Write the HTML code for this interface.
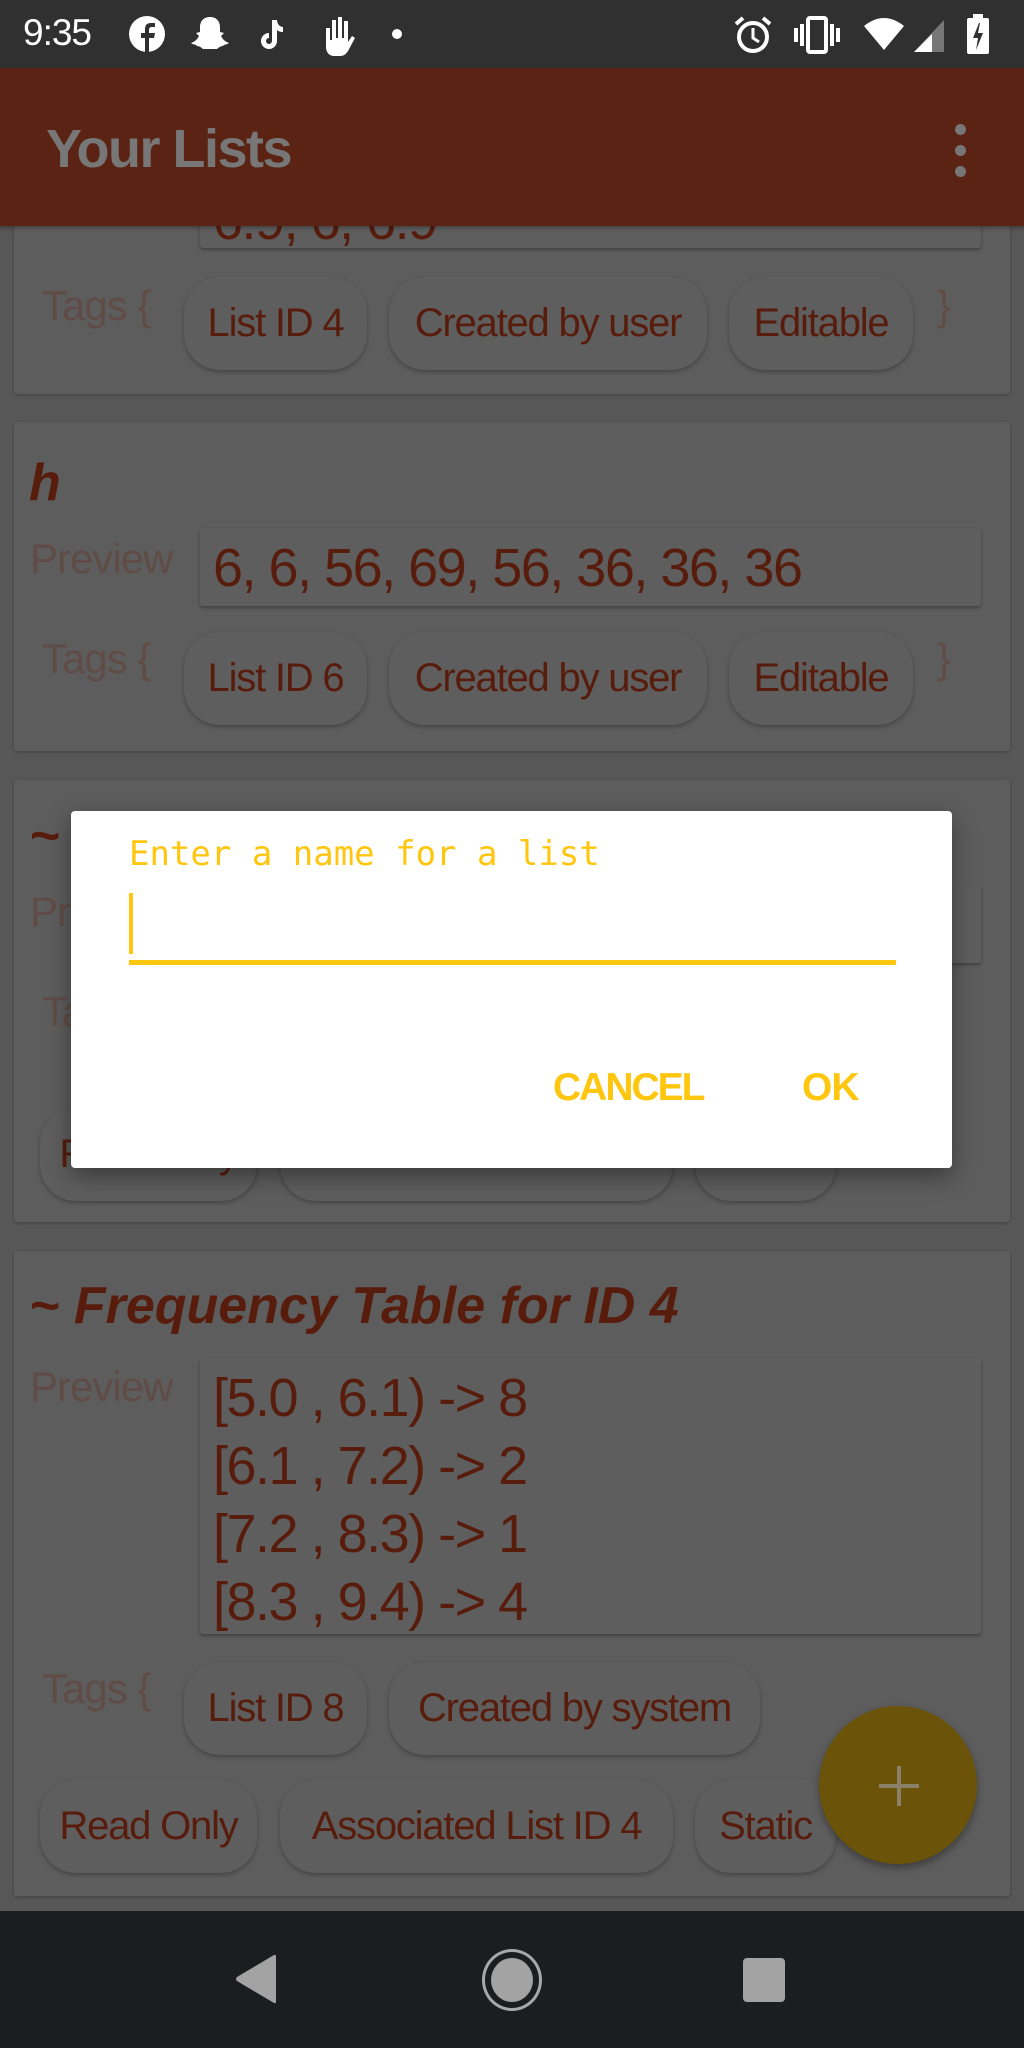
<!DOCTYPE html>
<html><head><meta charset="utf-8"><style>
*{margin:0;padding:0;box-sizing:border-box}
body{width:1024px;height:2048px;background:#575757;position:relative;overflow:hidden;font-family:"Liberation Sans",sans-serif}
.a{position:absolute}
.card{position:absolute;left:14px;width:996px;background:#5d5d5d;border-radius:3px;box-shadow:0 1px 3px rgba(0,0,0,.25)}
.chip{position:absolute;height:93px;border-radius:36px;background:#5e5e5e;box-shadow:0 2px 4px rgba(0,0,0,.28);color:#581c0d;font-size:40px;letter-spacing:-1.2px;line-height:93px;text-align:center;white-space:nowrap}
.box{position:absolute;left:200px;width:781px;background:#5e5e5e;box-shadow:0 2px 3px rgba(0,0,0,.3);border-radius:3px;color:#581c0d;font-size:54px;letter-spacing:-1.5px}
.lbl{position:absolute;color:#604c47;font-size:42px;letter-spacing:-1px;white-space:nowrap}
.ttl{position:absolute;color:#581c0d;font-weight:bold;font-style:italic;font-size:52px;white-space:nowrap}
</style></head><body>
<div class="a" style="left:0;top:0;width:1024px;height:68px;background:#303030"></div>
<div class="a" style="left:23px;top:12px;color:#fff;font-size:37px;letter-spacing:-1px">9:35</div>
<svg class="a" style="left:128px;top:15px" width="38" height="38" viewBox="0 0 38 38"><circle cx="19" cy="19" r="18" fill="#fff"/><path d="M21 37V23h5l1-5h-6v-3c0-2 1-3 3-3h3V8h-4c-4 0-6 2-6 6v4h-4v5h4v14z" fill="#303030"/></svg>
<svg class="a" style="left:190px;top:14px" width="40" height="40" viewBox="0 0 40 40"><path d="M20 3c-7 0-10 5-10 10v5l-4 1 3 3c-2 4-5 6-8 7 2 2 5 1 6 3 2 0 4 1 6 3h14c2-2 4-3 6-3 1-2 4-1 6-3-3-1-6-3-8-7l3-3-4-1v-5c0-5-3-10-10-10z" fill="#fff"/></svg>
<svg class="a" style="left:258px;top:18px" width="26" height="32" viewBox="0 0 26 32"><path d="M14 2h5c0 4 3 7 6 7v5c-3 0-5-1-6-2v11a8 8 0 1 1-8-8v5a3 3 0 1 0 3 3z" fill="#fff"/></svg>
<svg class="a" style="left:318px;top:14px" width="40" height="42" viewBox="0 0 40 42"><path d="M8 14h4v12h2V6h4v18h2V3h4v21h2V7h4v21l4-6 3 2-7 13c-2 3-4 5-8 5h-6c-5 0-8-4-8-9z" fill="#fff"/></svg>
<div class="a" style="left:392px;top:29px;width:10px;height:10px;border-radius:50%;background:#fff"></div>
<svg class="a" style="left:733px;top:15px" width="40" height="40" viewBox="0 0 40 40"><circle cx="20" cy="22" r="14" fill="none" stroke="#fff" stroke-width="4"/><path d="M20 13v10l6 4" stroke="#fff" stroke-width="3" fill="none"/><path d="M3 9l7-6M37 9l-7-6" stroke="#fff" stroke-width="4"/></svg>
<svg class="a" style="left:794px;top:16px" width="46" height="38" viewBox="0 0 46 38"><rect x="14" y="2" width="18" height="34" rx="2" fill="none" stroke="#fff" stroke-width="4"/><path d="M8 8v22M2 12v14M38 8v22M44 12v14" stroke="#fff" stroke-width="4"/></svg>
<svg class="a" style="left:862px;top:16px" width="44" height="36" viewBox="0 0 44 36"><path d="M2 10Q22-6 42 10L22 34z" fill="#fff"/></svg>
<svg class="a" style="left:912px;top:18px" width="34" height="36" viewBox="0 0 34 36"><path d="M32 2v32H2z" fill="#777"/><path d="M20 16v18H2z" fill="#fff"/></svg>
<svg class="a" style="left:966px;top:14px" width="24" height="40" viewBox="0 0 24 40"><rect x="7" y="0" width="10" height="4" fill="#fff"/><rect x="1" y="4" width="22" height="36" rx="2" fill="#fff"/><path d="M13 9l-6 15h5l-2 12 7-17h-5l2-10z" fill="#303030"/></svg>
<div class="card" style="top:150px;height:244px"></div>
<div class="box" style="top:170px;height:78px;line-height:54px;padding:24px 0 0 13px;overflow:hidden">6.9, 6, 6.9</div>
<div class="lbl" style="left:42px;top:282px">Tags {</div>
<div class="chip" style="left:184px;top:277px;width:183px">List ID 4</div>
<div class="chip" style="left:389px;top:277px;width:318px">Created by user</div>
<div class="chip" style="left:729px;top:277px;width:184px">Editable</div>
<div class="lbl" style="left:937px;top:282px">}</div>
<div class="a" style="left:0;top:68px;width:1024px;height:158px;background:#5a2314;box-shadow:0 2px 4px rgba(0,0,0,.3)"></div>
<div class="a" style="left:46px;top:118px;color:#777;font-size:54px;font-weight:bold;letter-spacing:-1.5px">Your Lists</div>
<div class="a" style="left:955px;top:124px;width:11px;height:11px;border-radius:50%;background:#777"></div>
<div class="a" style="left:955px;top:145px;width:11px;height:11px;border-radius:50%;background:#777"></div>
<div class="a" style="left:955px;top:166px;width:11px;height:11px;border-radius:50%;background:#777"></div>
<div class="card" style="top:422px;height:329px"></div>
<div class="ttl" style="left:29px;top:453px">h</div>
<div class="lbl" style="left:30px;top:535px">Preview</div>
<div class="box" style="top:528px;height:78px;line-height:80px;padding-left:13px">6, 6, 56, 69, 56, 36, 36, 36</div>
<div class="lbl" style="left:42px;top:635px">Tags {</div>
<div class="chip" style="left:184px;top:632px;width:183px">List ID 6</div>
<div class="chip" style="left:389px;top:632px;width:318px">Created by user</div>
<div class="chip" style="left:729px;top:632px;width:184px">Editable</div>
<div class="lbl" style="left:937px;top:635px">}</div>
<div class="card" style="top:780px;height:442px"></div>
<div class="ttl" style="left:29px;top:806px">~</div>
<div class="lbl" style="left:30px;top:888px">Preview</div>
<div class="box" style="top:884px;height:79px"></div>
<div class="lbl" style="left:42px;top:988px">Tags {</div>
<div class="chip" style="left:40px;top:1108px;width:217px">Read Only</div>
<div class="chip" style="left:280px;top:1108px;width:393px">Associated List ID 4</div>
<div class="chip" style="left:695px;top:1108px;width:141px">Static</div>
<div class="card" style="top:1251px;height:645px"></div>
<div class="ttl" style="left:29px;top:1276px">~ Frequency Table for ID 4</div>
<div class="lbl" style="left:30px;top:1363px">Preview</div>
<div class="box" style="top:1358px;height:276px;padding:6px 0 0 13px;line-height:68px">[5.0 , 6.1) -&gt; 8<br>[6.1 , 7.2) -&gt; 2<br>[7.2 , 8.3) -&gt; 1<br>[8.3 , 9.4) -&gt; 4</div>
<div class="lbl" style="left:42px;top:1665px">Tags {</div>
<div class="chip" style="left:184px;top:1662px;width:183px">List ID 8</div>
<div class="chip" style="left:389px;top:1662px;width:371px">Created by system</div>
<div class="chip" style="left:40px;top:1780px;width:217px">Read Only</div>
<div class="chip" style="left:280px;top:1780px;width:393px">Associated List ID 4</div>
<div class="chip" style="left:695px;top:1780px;width:141px">Static</div>
<div class="a" style="left:819px;top:1706px;width:158px;height:158px;border-radius:50%;background:#6b540a;box-shadow:0 4px 8px rgba(0,0,0,.35)"></div>
<div class="a" style="left:879px;top:1784px;width:40px;height:4px;background:#8a8266"></div>
<div class="a" style="left:897px;top:1766px;width:4px;height:40px;background:#8a8266"></div>
<div class="a" style="left:0;top:1911px;width:1024px;height:137px;background:#1b1e1f"></div>
<svg class="a" style="left:234px;top:1953px" width="44" height="52" viewBox="0 0 44 52"><path d="M40 2Q42 1 42 4V48Q42 51 40 50L3 28Q1 26 3 24z" fill="#a3a3a3"/></svg>
<div class="a" style="left:482px;top:1949px;width:60px;height:62px;border-radius:50%;border:3px solid #a8a8a8"></div>
<div class="a" style="left:491px;top:1958px;width:42px;height:44px;border-radius:50%;background:#a3a3a3"></div>
<div class="a" style="left:743px;top:1958px;width:42px;height:44px;border-radius:4px;background:#a3a3a3"></div>
<div class="a" style="left:71px;top:811px;width:881px;height:357px;background:#fff;border-radius:4px;box-shadow:0 8px 24px rgba(0,0,0,.4)"></div>
<div class="a" style="left:129px;top:834px;color:#ffc60f;font-family:'DejaVu Sans Mono','Liberation Mono',monospace;font-size:34px;white-space:pre">Enter a name for a list</div>
<div class="a" style="left:129px;top:893px;width:4px;height:61px;background:#ffc60f"></div>
<div class="a" style="left:129px;top:960px;width:767px;height:5px;background:#ffc60f"></div>
<div class="a" style="left:553px;top:1066px;color:#ffc60f;font-size:39px;font-weight:bold;letter-spacing:-2px">CANCEL</div>
<div class="a" style="left:802px;top:1066px;color:#ffc60f;font-size:39px;font-weight:bold;letter-spacing:-1px">OK</div>
</body></html>
